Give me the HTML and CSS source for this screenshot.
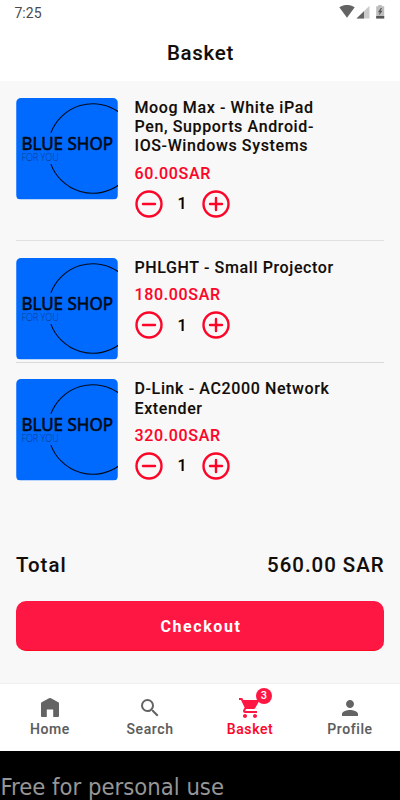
FILE: index.html
```html
<!DOCTYPE html>
<html lang="en">
<head>
<meta charset="utf-8">
<title>Basket</title>
<link rel="stylesheet" href="styles.css">
</head>
<body>
<svg class="defs" width="0" height="0" aria-hidden="true">
  <symbol id="thumb" viewBox="0 0 102 102">
    <rect width="102" height="102" fill="#006aff"/>
    <path d="M34.8 35A45 45 0 1 1 34.8 66.5" fill="none" stroke="#020a18" stroke-width="1.1"/>
    <text x="5.2" y="51.8" class="logo-name" textLength="92" lengthAdjust="spacingAndGlyphs">BLUE SHOP</text>
    <text x="5.2" y="63.3" class="logo-sub" textLength="37.5" lengthAdjust="spacingAndGlyphs">FOR YOU</text>
  </symbol>
  <symbol id="minus" viewBox="0 0 28 28">
    <circle cx="14" cy="14" r="12.5"/><path d="M8 14h12"/>
  </symbol>
  <symbol id="plus" viewBox="0 0 28 28">
    <circle cx="14" cy="14" r="12.5"/><path d="M8 14h12M14 8v12"/>
  </symbol>
</svg>
<header class="top">
  <div class="status">
    <span>7:25</span>
    <svg width="47" height="14" viewBox="0 0 47 14">
      <path d="M.3 2.2Q8-2.4 15.7 2.2L8 12.8Z" fill="#636363"/>
      <path d="M30.5.8V13.5H17.5Z" fill="#cbcbcb"/>
      <path d="M25 6.2v7.3h-7.5Z" fill="#636363"/>
      <path d="M39.3 0h3.5v1.3h2.4v12.2h-8V1.3h2.1Z" fill="#bdbdbd"/>
      <path d="M37.200 11h8v2.500h-8ZM41.800 3 39 7.300h1.700L40 10.500l3.500-4.700h-1.900L43 3Z" fill="#555"/>
    </svg>
  </div>
  <h1>Basket</h1>
</header>
<main>
  <article class="item first">
    <svg class="thumb"><use href="#thumb"/></svg>
    <div class="info">
      <h2>Moog Max - White iPad<br>Pen, Supports Android-<br>IOS-Windows Systems</h2>
      <p class="price">60.00SAR</p>
      <div class="qty"><svg><use href="#minus"/></svg><span>1</span><svg><use href="#plus"/></svg></div>
    </div>
  </article>
  <article class="item second">
    <svg class="thumb"><use href="#thumb"/></svg>
    <div class="info">
      <h2>PHLGHT - Small Projector</h2>
      <p class="price">180.00SAR</p>
      <div class="qty"><svg><use href="#minus"/></svg><span>1</span><svg><use href="#plus"/></svg></div>
    </div>
  </article>
  <article class="item third">
    <svg class="thumb"><use href="#thumb"/></svg>
    <div class="info">
      <h2>D-Link - AC2000 Network<br>Extender</h2>
      <p class="price">320.00SAR</p>
      <div class="qty"><svg><use href="#minus"/></svg><span>1</span><svg><use href="#plus"/></svg></div>
    </div>
  </article>
  <div class="total"><span>Total</span><span class="sum">560.00 SAR</span></div>
  <button class="checkout">Checkout</button>
</main>
<nav>
  <a><svg viewBox="0 0 24 24"><path d="M3 7.500Q3 6.700 3.700 6.300L11 2.300Q12 1.800 13 2.300L20.300 6.300Q21 6.700 21 7.500V20q0 1-1 1h-4.800V13.500H8.800V21H4q-1 0-1-1Z"/></svg><span>Home</span></a>
  <a><svg viewBox="0 0 24 24"><path d="M15.500 14h-.79l-.28-.27A6.471 6.471 0 0 0 16 9.500 6.500 6.500 0 1 0 9.500 16c1.610 0 3.090-.59 4.230-1.570l.27.28v.79l5 4.990L20.490 19l-4.990-5zm-6 0C7.010 14 5 11.990 5 9.500S7.010 5 9.500 5 14 7.010 14 9.500 11.990 14 9.500 14z"/></svg><span>Search</span></a>
  <a class="active"><svg viewBox="0 0 24 24"><path d="M7 18c-1.100 0-1.990.9-1.990 2S5.900 22 7 22s2-.9 2-2-.9-2-2-2zM1 2v2h2l3.600 7.590-1.350 2.450c-.16.280-.25.610-.25.960 0 1.100.9 2 2 2h12v-2H7.420c-.14 0-.25-.11-.25-.25l.03-.12.900-1.630h7.450c.75 0 1.410-.41 1.750-1.030l3.580-6.490A1 1 0 0 0 20 4H5.210l-.94-2H1zm16 16c-1.100 0-1.990.9-1.990 2s.89 2 1.990 2 2-.9 2-2-.9-2-2-2z"/></svg><b class="badge">3</b><span>Basket</span></a>
  <a><svg viewBox="0 0 24 24"><path d="M12 12c2.210 0 4-1.790 4-4s-1.790-4-4-4-4 1.790-4 4 1.790 4 4 4zm0 2c-2.670 0-8 1.340-8 4v2h16v-2c0-2.660-5.330-4-8-4z"/></svg><span>Profile</span></a>
</nav>
<footer>Free for personal use</footer>
</body>
</html>
```
FILE: styles.css
```css
* { box-sizing: border-box; }
body {
  margin: 0;
  width: 400px;
  height: 800px;
  overflow: hidden;
  display: flex;
  flex-direction: column;
  background: #f8f8f8;
  color: #120d08;
  font-family: Roboto, sans-serif;
  font-weight: 500;
}
h1, h2, p { margin: 0; font-weight: 500; }
h1, h2, .price, .total, .qty span, nav span { -webkit-text-stroke: 0.1px currentColor; }
svg { display: block; }
.defs { position: absolute; }
.logo-name {
  font: 400 17.800px "Noto Sans", sans-serif;
  fill: #020a18;
  stroke: #020a18;
  stroke-width: 0.6px;
}
.logo-sub { font: 300 11px "Open Sans", sans-serif; fill: #053c8c; }

.top { height: 81px; background: #fff; flex: none; }
.status {
  display: flex;
  justify-content: space-between;
  height: 26px;
  padding: 5px 14.500px 0 14.500px;
  font-size: 14px;
  font-weight: 400;
  line-height: 17px;
  color: #4a4a4a;
}
h1 {
  font-size: 20.500px;
  line-height: 54px;
  text-align: center;
  letter-spacing: 0.7px;
  padding-left: 1px;
}

main { flex: none; height: 602px; padding: 0 16px; }
.item { display: flex; gap: 16.500px; }
.first { height: 160px; padding-top: 17px; border-bottom: 1.500px solid #e0e0e0; }
.second { height: 122px; padding-top: 17px; border-bottom: 1px solid #d9d9d9; }
.third { height: 165px; padding-top: 16.400px; }
.thumb { width: 102px; height: 101.500px; border-radius: 5px; }
h2 { font-size: 16px; line-height: 19.200px; letter-spacing: 0.62px; }
.price {
  margin-top: 8px;
  font-size: 16px;
  line-height: 19px;
  letter-spacing: 0.65px;
  color: #fd0528;
}
.qty { display: flex; align-items: center; margin-top: 7px; height: 28px; }
.qty svg {
  width: 28px;
  height: 28px;
  fill: none;
  stroke: #fd0528;
  stroke-width: 2.400;
  stroke-linecap: round;
}
.qty span { width: 39px; text-align: center; font-size: 16px; color: #000; }
.total {
  display: flex;
  justify-content: space-between;
  height: 73px;
  padding-top: 24px;
  font-size: 20.400px;
  line-height: 26px;
  letter-spacing: 1px;
}
.sum { margin-right: -0.5px; }
.checkout {
  display: block;
  width: 100%;
  height: 50px;
  padding: 1px 0 0 2px;
  border: 0;
  border-bottom: 1px solid #fd0a20;
  border-radius: 10px;
  background: #ff1744;
  color: #fff;
  font: 700 16px Roboto, sans-serif;
  letter-spacing: 1.600px;
}

nav {
  flex: none;
  display: grid;
  grid-template-columns: repeat(4, 1fr);
  height: 68px;
  border-top: 1px solid #efefef;
  background: #fff;
}
nav a {
  position: relative;
  display: flex;
  flex-direction: column;
  align-items: center;
  padding-top: 12px;
  color: #5c5c5c;
  font-size: 14px;
  line-height: 18px;
  letter-spacing: 0.6px;
}
nav svg { width: 24px; height: 24px; fill: #646464; }
nav .active { color: #fd0528; }
.active svg { fill: #ff1744; }
.badge {
  position: absolute;
  left: 56px;
  top: 4px;
  width: 16px;
  height: 16px;
  border-radius: 50%;
  background: #ff1744;
  color: #fff;
  font-size: 11px;
  font-weight: 500;
  line-height: 16px;
  letter-spacing: 0;
  text-align: center;
}
footer {
  flex: 1;
  padding-top: 22px;
  background: #000;
  color: #969696;
  font: 400 23.600px/29px "DejaVu Sans Condensed", "DejaVu Sans", sans-serif;
  font-stretch: condensed;
  padding-left: 0.5px;
  white-space: nowrap;
}
```
